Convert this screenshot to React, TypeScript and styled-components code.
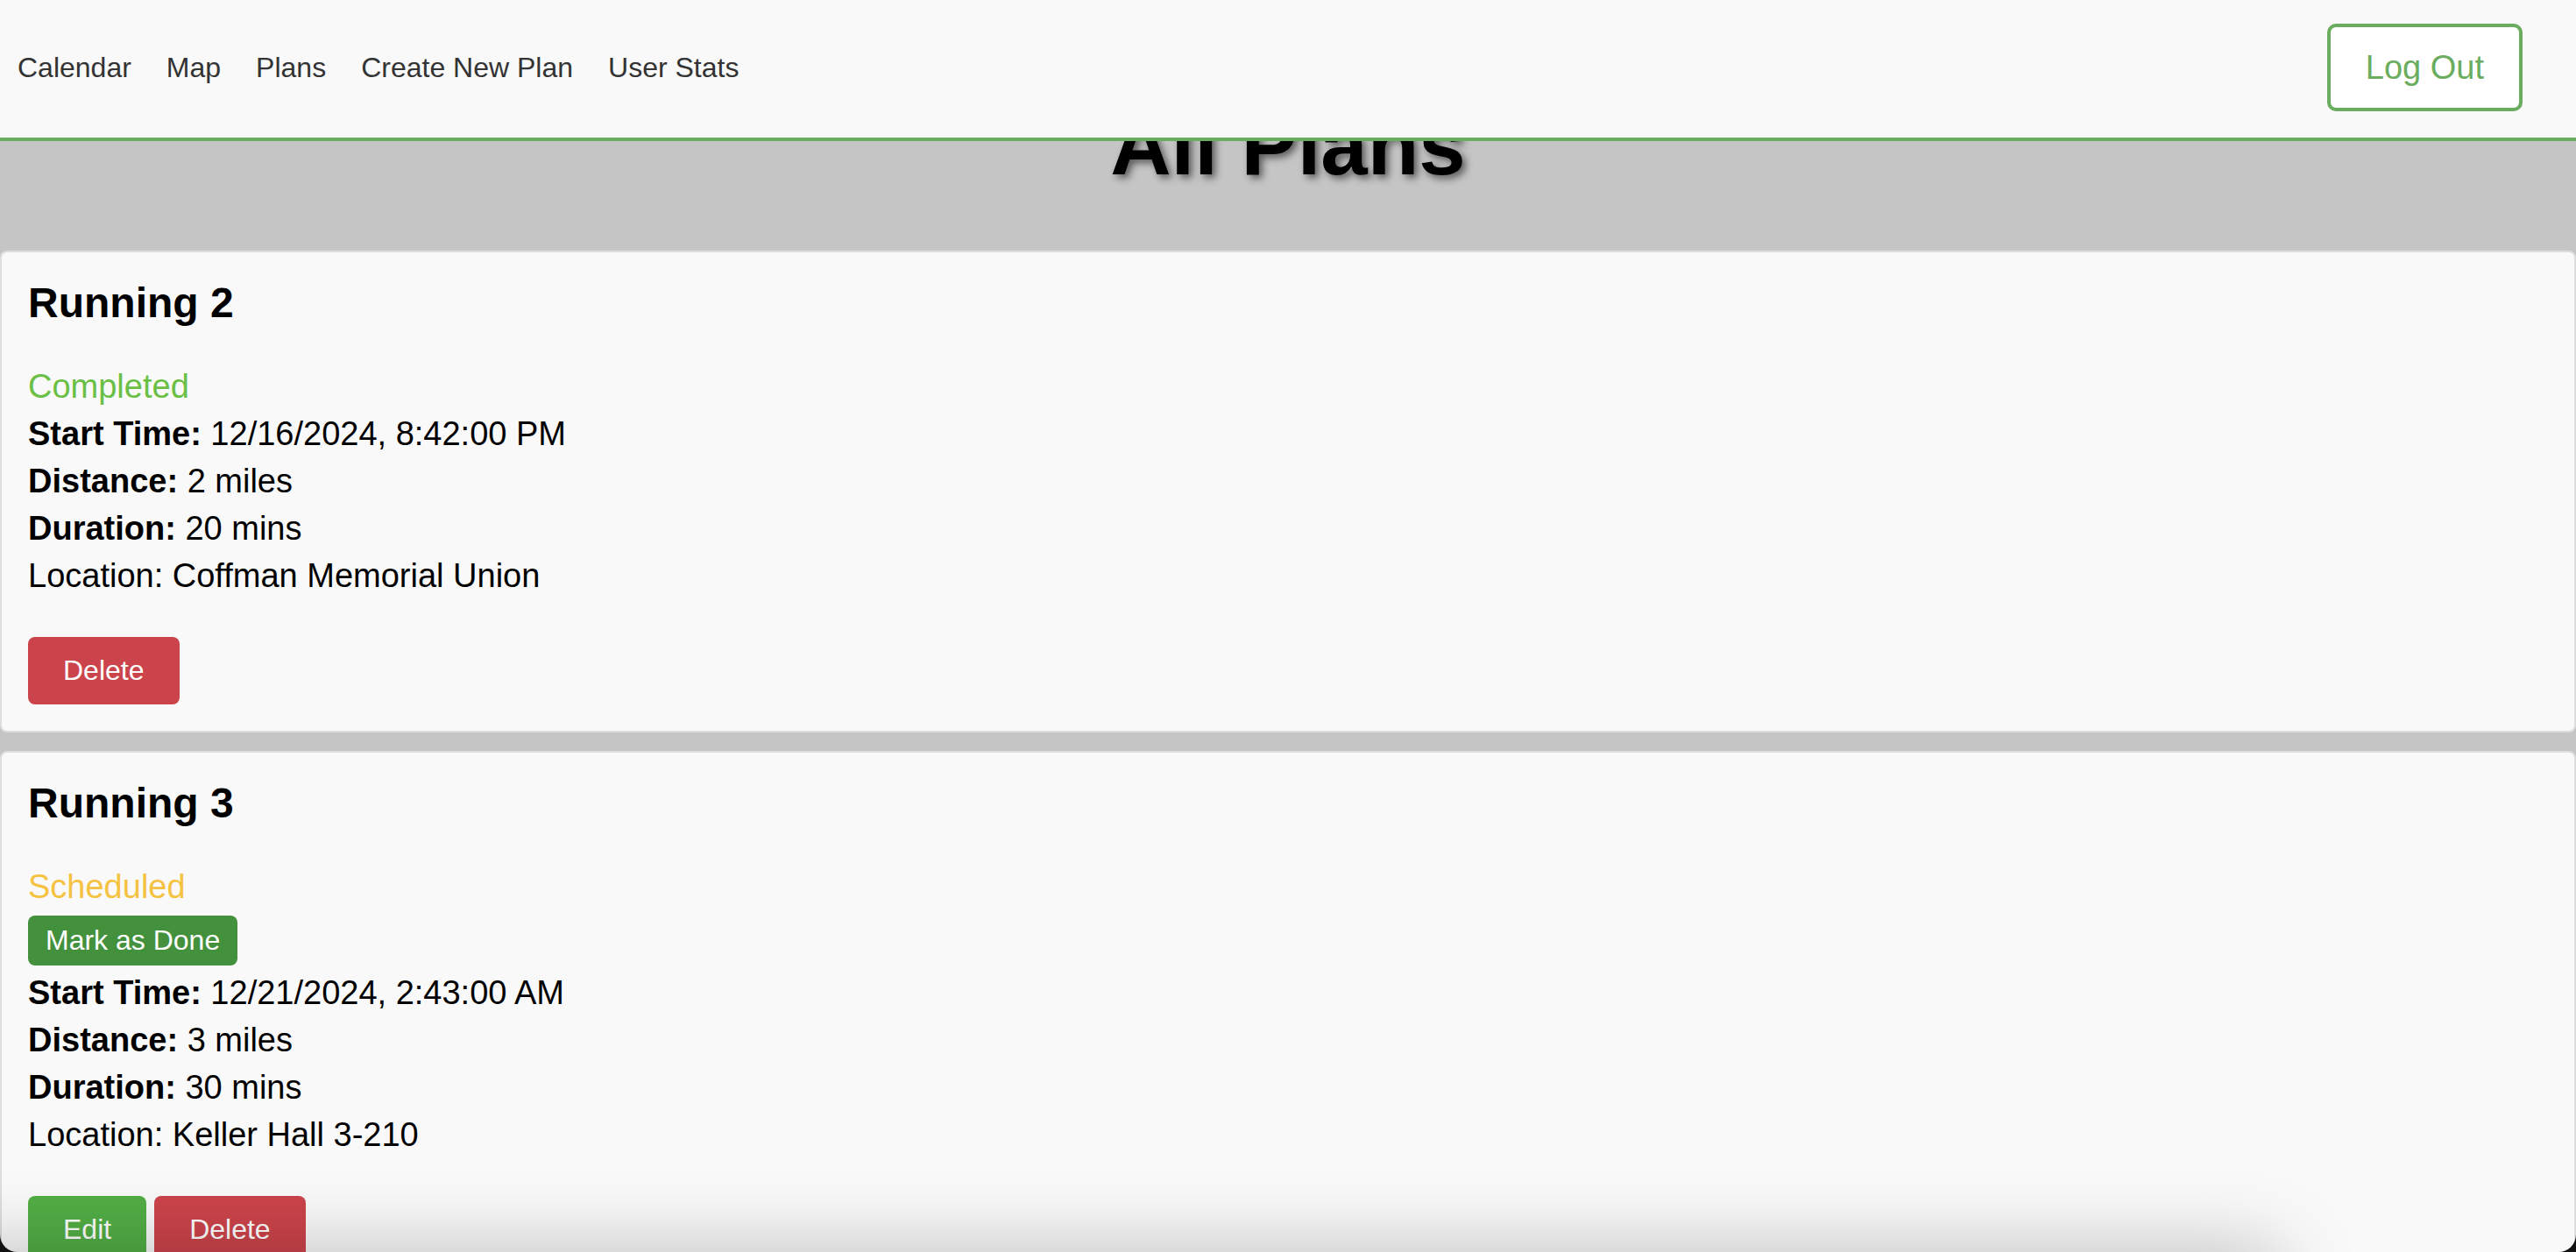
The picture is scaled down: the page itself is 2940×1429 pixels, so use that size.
import React from 'react';
import styled, {createGlobalStyle} from 'styled-components';

const GlobalStyle = createGlobalStyle`
  html {
    scrollbar-width: none;
  }
  html::-webkit-scrollbar {
    display: none;
  }
  body {
    margin: 0;
    background: #c6c5c6;
    font-family: "Liberation Sans", Arial, Helvetica, sans-serif;
    color: #000;
  }
`;

const Header = styled.header`
  position: fixed;
  top: 0;
  left: 0;
  right: 0;
  z-index: 10;
  box-sizing: border-box;
  height: 161px;
  display: flex;
  align-items: center;
  justify-content: space-between;
  padding: 0 61px 3px 20px;
  background: #f9f9f9;
  border-bottom: 4px solid #6aad5e;
`;

const NavList = styled.nav`
  display: flex;
  align-items: center;
  gap: 40px;
`;

const NavLink = styled.a`
  font-size: 32px;
  line-height: 40px;
  color: #333;
  text-decoration: none;
`;

const LogOutButton = styled.button`
  font-family: inherit;
  font-size: 38px;
  line-height: 44px;
  padding: 24px 40px;
  color: #6aad5e;
  background: #fff;
  border: 4px solid #6aad5e;
  border-radius: 10px;
`;

const Main = styled.main`
  padding-top: 111px;
`;

const PageTitle = styled.h1`
  margin: 0 0 65px;
  text-align: center;
  font-size: 96px;
  line-height: 110px;
  font-weight: bold;
  text-shadow: 4px 4px 8px rgba(0, 0, 0, 0.55);
`;

const PlanCard = styled.section`
  background: #f9f9f9;
  border: 2px solid #dddddd;
  border-radius: 8px;
  padding: 30px;
  margin-bottom: 21px;
`;

const CardTitle = styled.h2`
  margin: 0 0 40px;
  font-size: 48px;
  line-height: 56px;
  font-weight: bold;
`;

const Status = styled.div<{$done: boolean}>`
  font-size: 38px;
  line-height: 54px;
  color: ${p => (p.$done ? '#6abf45' : '#f5c242')};
`;

const Detail = styled.p`
  margin: 0;
  font-size: 38px;
  line-height: 54px;
`;

const Actions = styled.div`
  display: flex;
  gap: 9px;
  margin-top: 43px;
`;

const ActionButton = styled.button<{$kind: 'edit' | 'delete' | 'done'}>`
  font-family: inherit;
  font-size: 32px;
  line-height: 37px;
  color: #fff;
  border: none;
  border-radius: 8px;
  padding: ${p => (p.$kind === 'done' ? '10px 20px' : '20px 40px')};
  background: ${p =>
    p.$kind === 'delete' ? '#cc444b' : p.$kind === 'edit' ? '#52ae45' : '#43913d'};
`;

const DoneRow = styled.div`
  display: flex;
  margin: 6px 0 4px;
`;

const BottomShade = styled.div`
  position: fixed;
  left: -100px;
  bottom: -80px;
  width: 2700px;
  height: 80px;
  z-index: 15;
  pointer-events: none;
  box-shadow: 0 0 90px rgba(0, 0, 0, 0.26);
`;

const WindowFrame = styled.div`
  position: fixed;
  inset: 0;
  z-index: 20;
  pointer-events: none;
  border-radius: 0 0 20px 20px;
  box-shadow: 0 0 0 40px #121212;
`;

type Plan = {
  name: string;
  done: boolean;
  start: string;
  distance: string;
  duration: string;
  location: string;
};

const plans: Plan[] = [
  {
    name: 'Running 2',
    done: true,
    start: '12/16/2024, 8:42:00 PM',
    distance: '2 miles',
    duration: '20 mins',
    location: 'Coffman Memorial Union',
  },
  {
    name: 'Running 3',
    done: false,
    start: '12/21/2024, 2:43:00 AM',
    distance: '3 miles',
    duration: '30 mins',
    location: 'Keller Hall 3-210',
  },
];

function PlanItem({plan}: {plan: Plan}) {
  return (
    <PlanCard>
      <CardTitle>{plan.name}</CardTitle>
      <Status $done={plan.done}>{plan.done ? 'Completed' : 'Scheduled'}</Status>
      {!plan.done && (
        <DoneRow>
          <ActionButton $kind="done">Mark as Done</ActionButton>
        </DoneRow>
      )}
      <Detail><strong>Start Time:</strong> {plan.start}</Detail>
      <Detail><strong>Distance:</strong> {plan.distance}</Detail>
      <Detail><strong>Duration:</strong> {plan.duration}</Detail>
      <Detail>Location: {plan.location}</Detail>
      <Actions>
        {!plan.done && <ActionButton $kind="edit">Edit</ActionButton>}
        <ActionButton $kind="delete">Delete</ActionButton>
      </Actions>
    </PlanCard>
  );
}

function App() {
  return (
    <>
      <GlobalStyle />
      <Header>
        <NavList>
          <NavLink href="#">Calendar</NavLink>
          <NavLink href="#">Map</NavLink>
          <NavLink href="#">Plans</NavLink>
          <NavLink href="#">Create New Plan</NavLink>
          <NavLink href="#">User Stats</NavLink>
        </NavList>
        <LogOutButton>Log Out</LogOutButton>
      </Header>
      <Main>
        <PageTitle>All Plans</PageTitle>
        {plans.map(p => (
          <PlanItem key={p.name} plan={p} />
        ))}
      </Main>
      <BottomShade />
      <WindowFrame />
    </>
  );
}

export default App;
